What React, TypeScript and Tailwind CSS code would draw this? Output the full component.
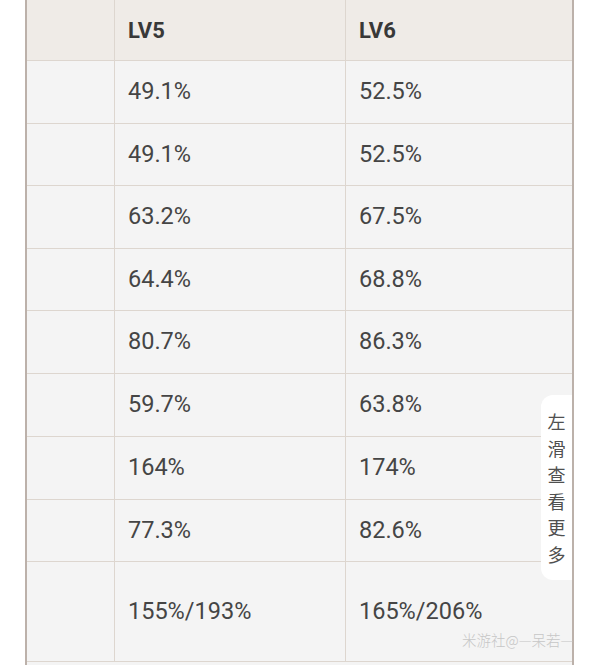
const rows = [
    { h: 'h-[63px]', a: '49.1%', b: '52.5%' },
    { h: 'h-[62px]', a: '49.1%', b: '52.5%' },
    { h: 'h-[63px]', a: '63.2%', b: '67.5%' },
    { h: 'h-[62px]', a: '64.4%', b: '68.8%' },
    { h: 'h-[63px]', a: '80.7%', b: '86.3%' },
    { h: 'h-[63px]', a: '59.7%', b: '63.8%' },
    { h: 'h-[63px]', a: '164%', b: '174%' },
    { h: 'h-[62px]', a: '77.3%', b: '82.6%' },
    { h: 'h-[63px]', a: '155%/193%', b: '165%/206%' }
];

const App = () => {
    return (
        <div className="relative w-[600px] h-[665px] overflow-hidden bg-white font-['Roboto','Noto_Sans_CJK_SC',sans-serif]">
            <div className="ml-[25px] w-[549px] border-x-2 border-[#bcb1aa] -mt-[1px]">
                <div className="flex h-[62px] bg-[#efebe7] border-y border-[#ddd6cf] text-[22px] font-bold text-[#383838]">
                    <div className="w-[88px] border-r border-[#ddd6cf]"></div>
                    <div className="w-[231px] border-r border-[#ddd6cf] flex items-center pl-[13px]">LV5</div>
                    <div className="flex-1 flex items-center pl-[13px]">LV6</div>
                </div>
                {rows.map((row, i) => (
                    <div key={i} className={`flex ${i === rows.length - 1 ? 'h-[100px]' : row.h} bg-[#f4f4f4] border-b border-[#ddd6cf] text-[23.5px] text-[#454545]`}>
                        <div className="w-[88px] border-r border-[#ddd6cf]"></div>
                        <div className="w-[231px] border-r border-[#ddd6cf] flex items-center pl-[13px]">{row.a}</div>
                        <div className="flex-1 flex items-center pl-[13px]">{row.b}</div>
                    </div>
                ))}
                <div className="h-[10px] bg-[#f4f4f4]"></div>
            </div>

            <div className="absolute left-[541px] top-[395px] w-[31px] h-[185px] bg-white rounded-l-[12px] flex flex-col items-center pt-[13px] text-[18px] leading-[26.5px] text-[#505050] font-['Noto_Sans_CJK_SC',sans-serif]">
                {'左滑查看更多'.split('').map((c) => (
                    <span key={c}>{c}</span>
                ))}
            </div>

            <div className="absolute left-[462px] top-[630px] text-[14.5px] leading-[20px] font-light text-[#c6c6c6] font-['Noto_Sans_CJK_SC',sans-serif]">
                米游社@—呆若—
            </div>
        </div>
    );
};

export default App;
